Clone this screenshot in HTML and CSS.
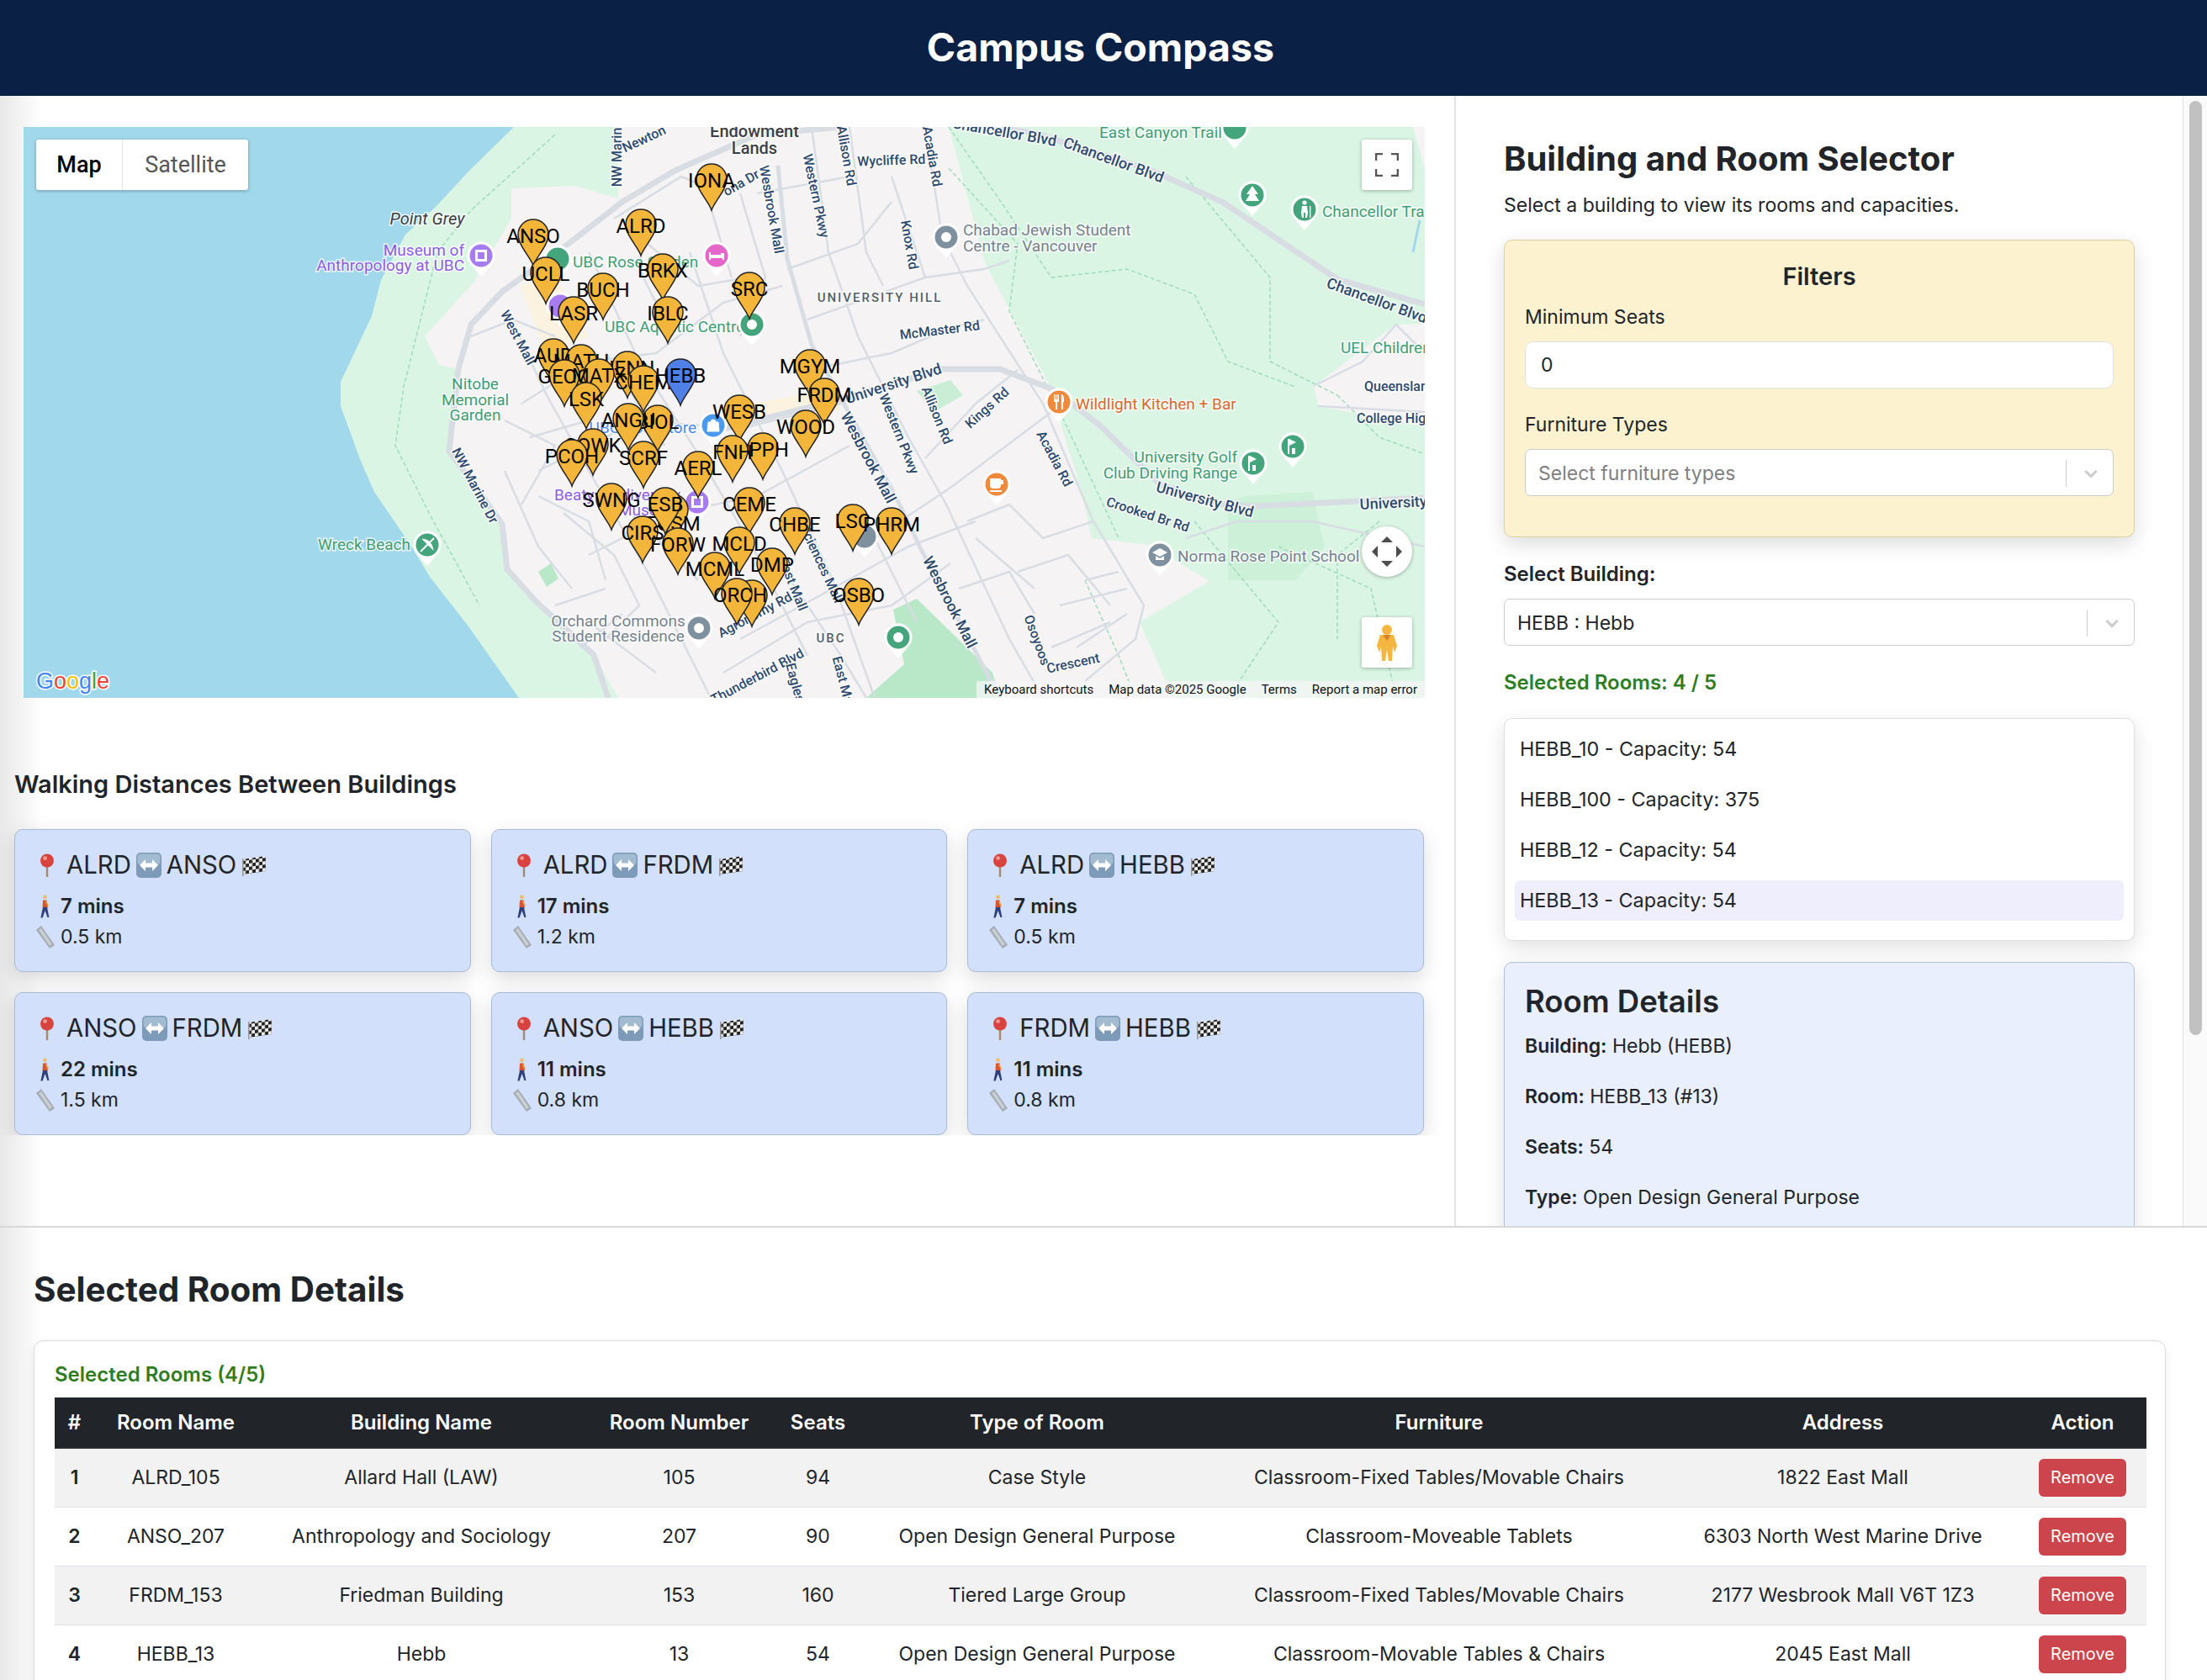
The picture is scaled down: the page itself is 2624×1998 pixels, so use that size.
FILE: index.html
```html
<!DOCTYPE html>
<html lang="en">
<head>
  <meta charset="UTF-8">
  <title>Campus Compass</title>
  <link rel="stylesheet" href="styles.css">
</head>
<body>

  <svg class="icon-defs" width="0" height="0">
    <defs>
      <pattern id="checks" width="8" height="8" patternUnits="userSpaceOnUse" patternTransform="skewY(-8)">
        <rect width="8" height="8" fill="#eee"/>
        <rect width="4" height="4" fill="#222"/>
        <rect x="4" y="4" width="4" height="4" fill="#222"/>
      </pattern>
      <symbol id="i-pin" viewBox="0 0 20 28">
        <rect x="8.8" y="11" width="2.4" height="17" fill="#a9896c"/>
        <circle cx="10" cy="8.5" r="8" fill="#d8433f"/>
        <circle cx="7.6" cy="5.6" r="2.4" fill="#f09a90"/>
      </symbol>
      <symbol id="i-swap" viewBox="0 0 30 30">
        <rect width="30" height="30" rx="5" fill="#7d9bb9"/>
        <rect x="1.5" y="1.5" width="27" height="13" rx="4" fill="#a3bbd0"/>
        <path d="M4 15l7-7v4.5h8V8l7 7-7 7v-4.5h-8V22z" fill="#fff"/>
      </symbol>
      <symbol id="i-flag" viewBox="0 0 29 26">
        <path d="M1 6l27-4v18L1 24z" fill="url(#checks)"/>
        <rect y="5" width="1.6" height="21" fill="#999"/>
      </symbol>
      <symbol id="i-walk" viewBox="0 0 14 28">
        <circle cx="7.5" cy="2.8" r="2.4" fill="#eebc6d"/>
        <path d="M5 6.5h4.6l1.4 9H4.5z" fill="#d8532f"/>
        <path d="M5 15h5l2.4 12h-2L7.6 19l-3 8.6H2.4z" fill="#2f3f7c"/>
        <path d="M9 7l3 6-1.4.7-2.6-5z" fill="#e9a13f"/>
      </symbol>
      <symbol id="i-ruler" viewBox="0 0 24 28">
        <path d="M1 6l6-5 16 23-6 4z" fill="#a4abb1"/>
        <path d="M4 6l3-2 13 19-3 2z" fill="#c9ced2"/>
      </symbol>
      <symbol id="i-chevron" viewBox="0 0 20 20">
        <path d="M4.5 7.5L10 13l5.5-5.5" fill="none" stroke="#ccc" stroke-width="2.6"/>
      </symbol>
    </defs>
  </svg>

  <header class="top-bar">
    <h1>Campus Compass</h1>
  </header>

  <div class="workspace">
    <div class="left-col">
      <div class="map-box">
        <svg class="map-art" viewBox="28 151 1666 679" width="1666" height="679">
          <defs>
            <path id="pin" d="M0 0C-3-10-18-24-18-37A18 18 0 1 1 18-37C18-24 3-10 0 0Z" stroke="#222" stroke-width="1.5"/>
            <g id="poi">
              <path d="M0 25L-12 11A16.5 16.5 0 1 1 12 11Z" fill="#fff"/>
              <circle r="13.5" fill="currentColor"/>
            </g>
          </defs>

          <!-- land -->
          <rect x="28" y="151" width="1666" height="679" fill="#a2d8ec"/>
          <path d="M611 151L557 204 519 245 482 279 453 333 442 376 405 454 405 483 428 546 445 585 488 648 511 686 557 745 617 830H1694V151Z" fill="#daf5e3"/>
          <path class="urban" d="M735 151V236L683 221 608 224V260L562 337 505 400 522 434 545 439 534 536 597 623 603 677 706 779 735 830H1395L1355 740 1438 691 1367 648 1298 640 1286 585 1246 454 1171 313 1128 151Z"/>
          <path class="urban" d="M1694 385L1659 386 1562 459 1567 483 1694 507Z"/>
          <path class="urban" d="M1694 151L1680 151 1694 200Z"/>
          <path d="M1460 600L1480 590 1560 585 1575 650 1540 690 1460 690Z" fill="#cdf0d8"/>
          <path d="M1062 725L1090 712 1180 800 1189 830H1030L1075 790Z" fill="#b9e8c8"/>
          <path d="M840 490L990 462 1000 488 850 512Z" fill="#fbf3e0"/>
          <path d="M618 340L660 330 700 400 650 420Z" fill="#fbf3e0"/>
          <path d="M640 680L655 670 664 688 650 698Z" fill="#b9e8c8"/>
          <path d="M1090 465L1130 452 1145 470 1110 490Z" fill="#c9eed5"/>
          <path d="M1680 300L1688 262" stroke="#a2d8ec" stroke-width="3" fill="none"/>

          <!-- trails -->
          <g class="trail">
            <path d="M1128 200L1210 290 1200 370 1265 500 1330 640"/>
            <path d="M1250 330L1340 320 1420 350 1460 430 1540 460"/>
            <path d="M1410 210L1510 330 1510 430 1590 470"/>
            <path d="M1420 620L1520 740 1460 830"/>
            <path d="M1520 650L1630 700 1660 830"/>
            <path d="M660 160L560 250 520 300 480 460 470 530 510 610 570 720"/>
            <path d="M1290 690L1330 780 1350 830"/>
            <path d="M1640 620L1590 660 1590 760"/>
            <path d="M1128 151L1190 240 1250 330M1590 470L1640 520 1694 540"/>
          </g>

          <!-- minor streets -->
          <g class="road-minor">
            <path d="M612 390L650 470 700 560 770 680 830 800 845 830"/>
            <path d="M700 300L760 430 830 540 900 660 960 780"/>
            <path d="M820 300L860 420 930 560 990 690 1040 830"/>
            <path d="M965 151L985 300 1020 400 1080 520 1125 600 1200 760 1240 830"/>
            <path d="M1010 151L1030 300 1050 340"/>
            <path d="M1100 151L1120 280 1150 340 1240 480 1300 620 1360 720 1350 760 1290 810"/>
            <path d="M1060 210L1100 330"/>
            <path d="M900 230L1010 210M936 320L1020 290 1060 240M960 380L1100 330 1170 320 1200 310"/>
            <path d="M960 440L1060 420 1130 390 1170 380"/>
            <path d="M1100 545L1160 480 1210 440M1040 640L1130 580 1250 490"/>
            <path d="M1150 620L1200 600 1240 640 1300 620M1210 680L1270 660 1320 720"/>
            <path d="M1260 720L1340 700M1250 770L1320 740"/>
            <path d="M640 560L760 500 880 510 1000 480"/>
            <path d="M620 480L700 430 780 420 860 360 930 340"/>
            <path d="M700 660L800 610 900 590 1010 530"/>
            <path d="M670 610L730 660 760 720 720 760"/>
            <path d="M700 740L780 800M750 610L830 690M630 520L700 500"/>
            <path d="M860 800L960 740 1060 720 1130 670"/>
            <path d="M880 760L990 700 1080 650 1160 620"/>
            <path d="M940 690L1000 780 1030 830M1040 640L1090 740"/>
            <path d="M560 400L610 380 660 400M730 260L810 210 860 230"/>
            <path d="M770 290L830 340 890 330M600 560L640 650 680 700"/>
            <path d="M1410 640L1470 620 1560 620 1694 650M1562 459L1620 430 1660 386 1694 420M1567 483L1694 490"/>
            <path d="M640 590L700 620 720 690M600 500L660 530 620 600M660 720L720 700M690 770L740 730"/>
            <path d="M880 230L910 330 880 400M840 230L870 330M760 320L800 400M720 420L790 530"/>
            <path d="M1140 700L1200 680 1230 730M1160 640L1230 700M1290 690L1330 680M1280 770L1340 730"/>
          </g>

          <!-- main roads -->
          <g class="road-main">
            <path d="M1000 151L900 160 804 202 740 240 677 289 597 347 560 386 545 439 534 536 597 623 603 677 637 715 706 779 723 830"/>
            <path d="M1180 151L1229 158 1367 202 1453 240 1590 332 1694 362"/>
            <path d="M860 510L1008 473 1120 439 1189 439 1252 463 1309 507 1378 575 1441 599 1493 602 1694 592"/>
          </g>
          <path class="road-mid" d="M925 197L936 308 965 410 1005 483 1062 585 1097 657 1154 764 1189 830"/>

          <!-- place names -->
          <g class="labels">
            <text class="place" x="508" y="267" font-style="italic">Point Grey</text>
            <text class="poi-purple" x="552" y="304" text-anchor="end">Museum of</text>
            <text class="poi-purple" x="552" y="322" text-anchor="end">Anthropology at UBC</text>
            <text class="poi-green" x="681" y="318" text-anchor="start">UBC Rose Garden</text>
            <text class="poi-green" x="719" y="395" text-anchor="start">UBC Aquatic Centre</text>
            <text class="poi-green" x="565" y="463">Nitobe</text>
            <text class="poi-green" x="565" y="482">Memorial</text>
            <text class="poi-green" x="565" y="500">Garden</text>
            <text class="poi-blue" x="828" y="515" text-anchor="end">UBC Bookstore</text>
            <text class="poi-purple" x="809" y="595" text-anchor="end">Beaty Biodiversity</text>
            <text class="poi-purple" x="809" y="613" text-anchor="end">Museum</text>
            <text class="poi-green" x="488" y="654" text-anchor="end">Wreck Beach</text>
            <text class="poi-grey" x="735" y="745">Orchard Commons</text>
            <text class="poi-grey" x="735" y="763">Student Residence</text>
            <text class="poi-grey" x="1145" y="280" text-anchor="start">Chabad Jewish Student</text>
            <text class="poi-grey" x="1145" y="299" text-anchor="start">Centre - Vancouver</text>
            <text class="poi-orange" x="1279" y="487" text-anchor="start">Wildlight Kitchen + Bar</text>
            <text class="poi-green" x="1471" y="550" text-anchor="end">University Golf</text>
            <text class="poi-green" x="1471" y="569" text-anchor="end">Club Driving Range</text>
            <text class="poi-grey" x="1400" y="668" text-anchor="start">Norma Rose Point School</text>
            <text class="poi-green" x="1307" y="164" text-anchor="start">East Canyon Trail</text>
            <text class="poi-green" x="1572" y="258" text-anchor="start">Chancellor Trail</text>
            <text class="poi-green" x="1594" y="420" text-anchor="start">UEL Children</text>
            <text class="place endow" x="897" y="163">Endowment</text>
            <text class="place endow" x="897" y="183">Lands</text>
            <text class="district" x="1046" y="359">UNIVERSITY HILL</text>
            <text class="district" x="988" y="764">UBC</text>
            <text class="road" x="1622" y="465" text-anchor="start">Queensland</text>
            <text class="road" x="1613" y="503" text-anchor="start">College High</text>
            <text class="road" transform="translate(1060 196) rotate(-2)">Wycliffe Rd</text>
            <text class="road" transform="translate(611 404) rotate(62)">West Mall</text>
            <text class="road" transform="translate(560 580) rotate(62)">NW Marine Dr</text>
            <text class="road" transform="translate(739 187) rotate(-90)">NW Marin</text>
            <text class="road" transform="translate(768 170) rotate(-25)">Newton</text>
            <text class="road" transform="translate(884 222) rotate(-30)">ona Dr</text>
            <text class="road" transform="translate(912 250) rotate(80)">Wesbrook Mall</text>
            <text class="road" transform="translate(965 234) rotate(78)">Western Pkwy</text>
            <text class="road" transform="translate(1001 186) rotate(80)">Allison Rd</text>
            <text class="road" transform="translate(1103 187) rotate(80)">Acadia Rd</text>
            <text class="road" transform="translate(1076 292) rotate(80)">Knox Rd</text>
            <text class="road" transform="translate(1118 398) rotate(-7)">McMaster Rd</text>
            <text class="road big" transform="translate(1064 462) rotate(-18)">University Blvd</text>
            <text class="road" transform="translate(1064 518) rotate(68)">Western Pkwy</text>
            <text class="road" transform="translate(1109 496) rotate(68)">Allison Rd</text>
            <text class="road" transform="translate(1177 489) rotate(-42)">Kings Rd</text>
            <text class="road big" transform="translate(1027 547) rotate(62)">Wesbrook Mall</text>
            <text class="road" transform="translate(1249 548) rotate(62)">Acadia Rd</text>
            <text class="road big" transform="translate(1431 600) rotate(15)">University Blvd</text>
            <text class="road big" transform="translate(1657 604) rotate(-3)">University</text>
            <text class="road" transform="translate(1363 617) rotate(18)">Crooked Br Rd</text>
            <text class="road big" transform="translate(1322 196) rotate(20)">Chancellor Blvd</text>
            <text class="road big" transform="translate(1193 163) rotate(10)">Chancellor Blvd</text>
            <text class="road big" transform="translate(1635 363) rotate(20)">Chancellor Blvd</text>
            <text class="road" transform="translate(972 673) rotate(65)">Sciences Mall</text>
            <text class="road" transform="translate(938 697) rotate(68)">East Mall</text>
            <text class="road" transform="translate(900 736) rotate(-28)">Agronomy Rd</text>
            <text class="road" transform="translate(903 809) rotate(-28)">Thunderbird Blvd</text>
            <text class="road" transform="translate(943 823) rotate(75)">Eagles Dr</text>
            <text class="road" transform="translate(998 814) rotate(75)">East Mall</text>
            <text class="road big" transform="translate(1124 719) rotate(63)">Wesbrook Mall</text>
            <text class="road" transform="translate(1228 763) rotate(70)">Osoyoos</text>
            <text class="road" transform="translate(1277 794) rotate(-12)">Crescent</text>
          </g>

          <!-- places of interest -->
          <g class="poi-icons">
            <g color="#a67cf0">
              <use href="#poi" x="572" y="304"/>
              <use href="#poi" x="666" y="364"/>
              <use href="#poi" x="829" y="597"/>
              <path d="M565 297h14v14h-14zM568 300v8h8v-8zM822 590h14v14h-14zM825 593v8h8v-8z" fill="#fff" fill-rule="evenodd"/>
            </g>
            <g color="#44a47c">
              <use href="#poi" x="663" y="308"/>
              <use href="#poi" x="894" y="386"/>
              <circle cx="894" cy="386" r="6" fill="#fff"/>
              <use href="#poi" x="508" y="648"/>
              <path d="M500 656L516 640M504 642a12 12 0 0 1 10 10z" stroke="#fff" stroke-width="2" fill="#fff"/>
              <use href="#poi" x="1068" y="758"/>
              <circle cx="1068" cy="758" r="6" fill="#fff"/>
              <use href="#poi" x="1468" y="152"/>
              <use href="#poi" x="1489" y="232"/>
              <path d="M1489 221l-7 10h4l-5 8h16l-5-8h4z" fill="#fff"/>
              <use href="#poi" x="1551" y="249"/>
              <circle cx="1551" cy="241" r="2.6" fill="#fff"/>
              <path d="M1548 245h6l1 8-1 6h-2v-6h-2v6h-2l-1-6zM1557 245h1.4v14H1557z" fill="#fff"/>
              <use href="#poi" x="1490" y="551"/>
              <path d="M1484 542h2v18h-2zM1486 542l8 4-8 4zM1489 553h4v7h-4z" fill="#fff"/>
              <use href="#poi" x="1537" y="531"/>
              <path d="M1531 522h2v18h-2zM1533 522l8 4-8 4zM1536 533h4v7h-4z" fill="#fff"/>
            </g>
            <use href="#poi" x="852" y="304" color="#e667c9"/>
            <path d="M843 300h2v3h12v-2h4v8h-2v-2h-14v2h-2z" fill="#fff"/>
            <use href="#poi" x="848" y="506" color="#4a9bf0"/>
            <path d="M842 502h12l1 11h-14zM845 502a3 3 0 0 1 6 0" fill="#fff" stroke="#fff"/>
            <g color="#7f919f">
              <use href="#poi" x="1125" y="282"/>
              <circle cx="1125" cy="282" r="6" fill="#fff"/>
              <use href="#poi" x="831" y="747"/>
              <circle cx="831" cy="747" r="6" fill="#fff"/>
              <use href="#poi" x="1379" y="660"/>
              <path d="M1370 657l9-5 9 5-9 5zM1374 661v5h10v-5l-5 3z" fill="#fff"/>
              <use href="#poi" x="1028" y="638"/>
            </g>
            <use href="#poi" x="1259" y="478" color="#ef8a3c"/>
            <path d="M1253 469v9h2v9h2v-9h2v-9h-1.5v6h-1v-6h-1v6h-1v-6zM1262 469c3 0 3 5 3 9h-1v9h-2z" fill="#fff"/>
            <use href="#poi" x="1185" y="576" color="#ef8a3c"/>
            <path d="M1177 569h13v8a4 4 0 0 1-4 4h-5a4 4 0 0 1-4-4zM1190 571h3v5h-3zM1177 583h14v2h-14z" fill="#fff"/>
          </g>

          <!-- building markers, south ones on top -->
          <g class="markers">
            <use class="pin" href="#pin" x="846" y="250"/><text x="846" y="223">IONA</text>
            <use class="pin" href="#pin" x="762" y="304"/><text x="762" y="277">ALRD</text>
            <use class="pin" href="#pin" x="634" y="316"/><text x="634" y="289">ANSO</text>
            <use class="pin" href="#pin" x="788" y="357"/><text x="788" y="330">BRKX</text>
            <use class="pin" href="#pin" x="649" y="361"/><text x="649" y="334">UCLL</text>
            <use class="pin" href="#pin" x="891" y="379"/><text x="891" y="352">SRC</text>
            <use class="pin" href="#pin" x="717" y="380"/><text x="717" y="353">BUCH</text>
            <use class="pin" href="#pin" x="682" y="408"/><text x="682" y="381">LASR</text>
            <use class="pin" href="#pin" x="794" y="408"/><text x="794" y="381">IBLC</text>
            <use class="pin" href="#pin" x="658" y="458"/><text x="658" y="431">AUD</text>
            <use class="pin" href="#pin" x="691" y="465"/><text x="691" y="438">MATH</text>
            <use class="pin" href="#pin" x="963" y="471"/><text x="963" y="444">MGYM</text>
            <use class="pin" href="#pin" x="746" y="473"/><text x="746" y="446">HENN</text>
            <use class="pin" href="#pin" x="671" y="483"/><text x="671" y="456">GEOG</text>
            <use class="pin" href="#pin" x="712" y="482"/><text x="712" y="455">MATX</text>
            <use class="pin" href="#pin" x="765" y="490"/><text x="765" y="463">CHEM</text>
            <use class="pin blue" href="#pin" x="809" y="482"/><text x="809" y="455">HEBB</text>
            <use class="pin" href="#pin" x="980" y="505"/><text x="980" y="478">FRDM</text>
            <use class="pin" href="#pin" x="697" y="510"/><text x="697" y="483">LSK</text>
            <use class="pin" href="#pin" x="879" y="525"/><text x="879" y="498">WESB</text>
            <use class="pin" href="#pin" x="782" y="537"/><text x="782" y="510">BIOL</text>
            <use class="pin" href="#pin" x="747" y="535"/><text x="747" y="508">ANGU</text>
            <use class="pin" href="#pin" x="958" y="543"/><text x="958" y="516">WOOD</text>
            <use class="pin" href="#pin" x="705" y="565"/><text x="705" y="538">SOWK</text>
            <use class="pin" href="#pin" x="907" y="570"/><text x="907" y="543">SPPH</text>
            <use class="pin" href="#pin" x="871" y="573"/><text x="871" y="546">FNH</text>
            <use class="pin" href="#pin" x="680" y="578"/><text x="680" y="551">PCOH</text>
            <use class="pin" href="#pin" x="765" y="580"/><text x="765" y="553">SCRF</text>
            <use class="pin" href="#pin" x="830" y="592"/><text x="830" y="565">AERL</text>
            <use class="pin" href="#pin" x="727" y="630"/><text x="727" y="603">SWNG</text>
            <use class="pin" href="#pin" x="891" y="635"/><text x="891" y="608">CEME</text>
            <use class="pin" href="#pin" x="800" y="643"/><text x="800" y="631">EOSM</text>
            <use class="pin" href="#pin" x="791" y="635"/><text x="791" y="608">ESB</text>
            <use class="pin" href="#pin" x="1014" y="655"/><text x="1014" y="628">LSC</text>
            <use class="pin" href="#pin" x="945" y="659"/><text x="945" y="632">CHBE</text>
            <use class="pin" href="#pin" x="1060" y="659"/><text x="1060" y="632">PHRM</text>
            <use class="pin" href="#pin" x="764" y="669"/><text x="764" y="642">CIRS</text>
            <use class="pin" href="#pin" x="879" y="682"/><text x="879" y="655">MCLD</text>
            <use class="pin" href="#pin" x="806" y="683"/><text x="806" y="656">FORW</text>
            <use class="pin" href="#pin" x="918" y="707"/><text x="918" y="680">DMP</text>
            <use class="pin" href="#pin" x="850" y="712"/><text x="850" y="685">MCML</text>
            <use class="pin" href="#pin" x="894" y="745"/>
            <use class="pin" href="#pin" x="876" y="743"/><text x="880" y="716">ORCH</text>
            <use class="pin" href="#pin" x="1021" y="743"/><text x="1021" y="716">OSBO</text>
          </g>

          <text class="google" x="43" y="819"><tspan fill="#4285f4">G</tspan><tspan fill="#ea4335">o</tspan><tspan fill="#fbbc05">o</tspan><tspan fill="#4285f4">g</tspan><tspan fill="#34a853">l</tspan><tspan fill="#ea4335">e</tspan></text>
        </svg>

        <div class="map-type">
          <span class="map-type-on">Map</span>
          <span class="map-type-off">Satellite</span>
        </div>

        <div class="map-btn fullscreen-btn">
          <svg width="28" height="28" viewBox="0 0 28 28"><path d="M1 9V1h8M19 1h8v8M27 19v8h-8M9 27H1v-8" fill="none" stroke="#555" stroke-width="2.6"/></svg>
        </div>

        <div class="pan-btn">
          <svg width="36" height="36" viewBox="0 0 36 36" fill="#4d4d4d"><path d="M18 0l7 7H11zM18 36l-7-7h14zM0 18l7-7v14zM36 18l-7 7V11z"/></svg>
        </div>

        <div class="map-btn pegman-btn">
          <svg width="26" height="44" viewBox="0 0 26 44">
            <circle cx="13" cy="7" r="6" fill="#f4b63f"/>
            <path d="M5 13h16l4 13-3 8-2-7-1 17h-4l-2-13-2 13H7L6 27l-2 7-3-8z" fill="#f4b63f"/>
            <path d="M8 13h10l-5 7z" fill="#d8832b"/>
          </svg>
        </div>

        <div class="map-attrib">
          <span>Keyboard shortcuts</span>
          <span>Map data ©2025 Google</span>
          <span>Terms</span>
          <span>Report a map error</span>
        </div>
      </div>

      <h3 class="walk-title">Walking Distances Between Buildings</h3>

      <div class="walk-clip">
        <div class="walk-grid">
          <div class="walk-card">
            <div class="walk-route"><svg class="ico-pin"><use href="#i-pin"/></svg><span>ALRD</span><svg class="ico-swap"><use href="#i-swap"/></svg><span>ANSO</span><svg class="ico-flag"><use href="#i-flag"/></svg></div>
            <div class="walk-line"><svg class="ico-walk"><use href="#i-walk"/></svg><strong>7 mins</strong></div>
            <div class="walk-line"><svg class="ico-ruler"><use href="#i-ruler"/></svg><span>0.5 km</span></div>
          </div>
          <div class="walk-card">
            <div class="walk-route"><svg class="ico-pin"><use href="#i-pin"/></svg><span>ALRD</span><svg class="ico-swap"><use href="#i-swap"/></svg><span>FRDM</span><svg class="ico-flag"><use href="#i-flag"/></svg></div>
            <div class="walk-line"><svg class="ico-walk"><use href="#i-walk"/></svg><strong>17 mins</strong></div>
            <div class="walk-line"><svg class="ico-ruler"><use href="#i-ruler"/></svg><span>1.2 km</span></div>
          </div>
          <div class="walk-card">
            <div class="walk-route"><svg class="ico-pin"><use href="#i-pin"/></svg><span>ALRD</span><svg class="ico-swap"><use href="#i-swap"/></svg><span>HEBB</span><svg class="ico-flag"><use href="#i-flag"/></svg></div>
            <div class="walk-line"><svg class="ico-walk"><use href="#i-walk"/></svg><strong>7 mins</strong></div>
            <div class="walk-line"><svg class="ico-ruler"><use href="#i-ruler"/></svg><span>0.5 km</span></div>
          </div>
          <div class="walk-card">
            <div class="walk-route"><svg class="ico-pin"><use href="#i-pin"/></svg><span>ANSO</span><svg class="ico-swap"><use href="#i-swap"/></svg><span>FRDM</span><svg class="ico-flag"><use href="#i-flag"/></svg></div>
            <div class="walk-line"><svg class="ico-walk"><use href="#i-walk"/></svg><strong>22 mins</strong></div>
            <div class="walk-line"><svg class="ico-ruler"><use href="#i-ruler"/></svg><span>1.5 km</span></div>
          </div>
          <div class="walk-card">
            <div class="walk-route"><svg class="ico-pin"><use href="#i-pin"/></svg><span>ANSO</span><svg class="ico-swap"><use href="#i-swap"/></svg><span>HEBB</span><svg class="ico-flag"><use href="#i-flag"/></svg></div>
            <div class="walk-line"><svg class="ico-walk"><use href="#i-walk"/></svg><strong>11 mins</strong></div>
            <div class="walk-line"><svg class="ico-ruler"><use href="#i-ruler"/></svg><span>0.8 km</span></div>
          </div>
          <div class="walk-card">
            <div class="walk-route"><svg class="ico-pin"><use href="#i-pin"/></svg><span>FRDM</span><svg class="ico-swap"><use href="#i-swap"/></svg><span>HEBB</span><svg class="ico-flag"><use href="#i-flag"/></svg></div>
            <div class="walk-line"><svg class="ico-walk"><use href="#i-walk"/></svg><strong>11 mins</strong></div>
            <div class="walk-line"><svg class="ico-ruler"><use href="#i-ruler"/></svg><span>0.8 km</span></div>
          </div>
        </div>
      </div>
    </div>

    <div class="right-col">
      <h2 class="picker-title">Building and Room Selector</h2>
      <p class="picker-sub">Select a building to view its rooms and capacities.</p>

      <div class="filters">
        <h3>Filters</h3>
        <label>Minimum Seats</label>
        <div class="num-input">0</div>
        <label class="second">Furniture Types</label>
        <div class="select-box placeholder">
          <span>Select furniture types</span>
          <i class="select-sep"></i>
          <svg class="select-arrow"><use href="#i-chevron"/></svg>
        </div>
      </div>

      <label class="building-label">Select Building:</label>
      <div class="select-box">
        <span>HEBB : Hebb</span>
        <i class="select-sep"></i>
        <svg class="select-arrow"><use href="#i-chevron"/></svg>
      </div>

      <div class="room-count">Selected Rooms: 4 / 5</div>

      <div class="room-list">
        <div class="room-item">HEBB_10 - Capacity: 54</div>
        <div class="room-item">HEBB_100 - Capacity: 375</div>
        <div class="room-item">HEBB_12 - Capacity: 54</div>
        <div class="room-item active">HEBB_13 - Capacity: 54</div>
      </div>

      <div class="room-details">
        <h3>Room Details</h3>
        <p><strong>Building:</strong> Hebb (HEBB)</p>
        <p><strong>Room:</strong> HEBB_13 (#13)</p>
        <p><strong>Seats:</strong> 54</p>
        <p><strong>Type:</strong> Open Design General Purpose</p>
        <p><strong>Furniture:</strong> Classroom-Movable Tables &amp; Chairs</p>
      </div>
    </div>

    <div class="scroll-track"><div class="scroll-thumb"></div></div>
  </div>

  <section class="summary">
    <h2>Selected Room Details</h2>
    <div class="summary-card">
      <div class="summary-count">Selected Rooms (4/5)</div>
      <table class="summary-table">
        <colgroup>
          <col class="c-num"><col class="c-room"><col class="c-building"><col class="c-number"><col class="c-seats"><col class="c-type"><col class="c-furn"><col class="c-addr"><col class="c-action">
        </colgroup>
        <thead>
          <tr><th>#</th><th>Room Name</th><th>Building Name</th><th>Room Number</th><th>Seats</th><th>Type of Room</th><th>Furniture</th><th>Address</th><th>Action</th></tr>
        </thead>
        <tbody>
          <tr><td class="row-num">1</td><td>ALRD_105</td><td>Allard Hall (LAW)</td><td>105</td><td>94</td><td>Case Style</td><td>Classroom-Fixed Tables/Movable Chairs</td><td>1822 East Mall</td><td><button class="remove-btn">Remove</button></td></tr>
          <tr><td class="row-num">2</td><td>ANSO_207</td><td>Anthropology and Sociology</td><td>207</td><td>90</td><td>Open Design General Purpose</td><td>Classroom-Moveable Tablets</td><td>6303 North West Marine Drive</td><td><button class="remove-btn">Remove</button></td></tr>
          <tr><td class="row-num">3</td><td>FRDM_153</td><td>Friedman Building</td><td>153</td><td>160</td><td>Tiered Large Group</td><td>Classroom-Fixed Tables/Movable Chairs</td><td>2177 Wesbrook Mall V6T 1Z3</td><td><button class="remove-btn">Remove</button></td></tr>
          <tr><td class="row-num">4</td><td>HEBB_13</td><td>Hebb</td><td>13</td><td>54</td><td>Open Design General Purpose</td><td>Classroom-Movable Tables &amp; Chairs</td><td>2045 East Mall</td><td><button class="remove-btn">Remove</button></td></tr>
        </tbody>
      </table>
    </div>
  </section>

</body>
</html>
```

FILE: styles.css
```css
* {
  box-sizing: border-box;
}

html, body {
  margin: 0;
  height: 1998px;
  overflow: hidden;
}

body {
  font-family: Inter, "Noto Sans", sans-serif;
  font-size: 23px;
  line-height: 34px;
  color: #212529;
  background: linear-gradient(to right, #e8e8e8, #fff 50px);
}

h1, h2, h3, p {
  margin: 0;
}

.icon-defs {
  position: absolute;
}

.top-bar {
  height: 114px;
  padding-right: 7px;
  background-color: #0a2044;
  color: white;
  text-align: center;
}

.top-bar h1 {
  font-size: 46.5px;
  font-weight: 700;
  line-height: 112px;
}

.workspace {
  display: flex;
  height: 1346px;
  border-bottom: 2px solid #d6d8da;
  overflow: hidden;
}

/* Left column */
.left-col {
  width: 1731px;
  padding: 37px 36px 0 17px;
  border-right: 2px solid #e2e3e5;
}

.map-box {
  position: relative;
  width: 1666px;
  height: 679px;
  margin-left: 11px;
  overflow: hidden;
}

.map-art {
  display: block;
  font-family: Roboto, sans-serif;
}

.urban {
  fill: #f5f3f4;
}

.trail path {
  fill: none;
  stroke: #9fdcba;
  stroke-width: 1.5;
  stroke-dasharray: 5 3;
}

.road-minor path {
  fill: none;
  stroke: #d8dde4;
  stroke-width: 2.5;
}

.road-main path {
  fill: none;
  stroke: #d8dde4;
  stroke-width: 7;
}

.road-mid {
  fill: none;
  stroke: #d8dde4;
  stroke-width: 5;
}

.labels {
  text-anchor: middle;
}

.labels text {
  font-size: 19px;
  paint-order: stroke;
  stroke: rgba(255, 255, 255, 0.8);
  stroke-width: 3px;
}

.labels .road {
  font-size: 16px;
  font-weight: 500;
  fill: #2d4a6e;
}

.labels .road.big {
  font-size: 18px;
}

.labels .place {
  font-size: 20px;
  fill: #3b3f45;
}

.labels .endow {
  font-size: 20px;
  font-weight: 500;
}

.labels .district {
  font-size: 15px;
  font-weight: 500;
  letter-spacing: 2px;
  fill: #555f68;
}

.labels .poi-purple { fill: #8d5ce6; }
.labels .poi-green { fill: #3f9d74; }
.labels .poi-blue { fill: #4a8af0; }
.labels .poi-grey { fill: #75828e; }
.labels .poi-orange { fill: #d8682d; }

.pin {
  fill: #f3b63a;
}

.pin.blue {
  fill: #4f80e8;
}

.markers text {
  font-size: 24px;
  text-anchor: middle;
  fill: #000;
}

.google {
  font-family: "Liberation Sans", sans-serif;
  font-size: 27px;
  paint-order: stroke;
  stroke: #fff;
  stroke-width: 3px;
}

.map-type {
  position: absolute;
  top: 15px;
  left: 15px;
  display: flex;
  height: 60px;
  background: white;
  border-radius: 3px;
  box-shadow: 0 1px 4px rgba(0, 0, 0, 0.3);
  font-family: Roboto, sans-serif;
  font-size: 27px;
  line-height: 60px;
}

.map-type-on {
  width: 103px;
  text-align: center;
  color: #000;
  font-weight: 500;
  border-right: 1px solid #e6e6e6;
}

.map-type-off {
  width: 149px;
  text-align: center;
  color: #565656;
}

.map-btn {
  position: absolute;
  left: 1591px;
  display: flex;
  align-items: center;
  justify-content: center;
  width: 60px;
  height: 60px;
  background: white;
  border-radius: 3px;
  box-shadow: 0 1px 4px rgba(0, 0, 0, 0.3);
}

.fullscreen-btn {
  top: 15px;
}

.pegman-btn {
  top: 583px;
}

.pan-btn {
  position: absolute;
  top: 475px;
  left: 1591px;
  display: flex;
  align-items: center;
  justify-content: center;
  width: 60px;
  height: 60px;
  background: white;
  border-radius: 50%;
  box-shadow: 0 1px 4px rgba(0, 0, 0, 0.3);
}

.map-attrib {
  position: absolute;
  right: 0;
  bottom: 0;
  display: flex;
  gap: 18px;
  height: 20px;
  padding: 0 9px;
  background: rgba(245, 245, 245, 0.75);
  font-family: Roboto, sans-serif;
  font-size: 15px;
  line-height: 20px;
  color: #111;
}

.walk-title {
  margin-top: 83px;
  font-size: 29px;
  font-weight: 600;
  line-height: 40px;
}

.walk-clip {
  margin-top: 33px;
  clip-path: inset(-40px -40px 0 -40px);
}

.walk-grid {
  display: grid;
  grid-template-columns: repeat(3, 1fr);
  gap: 24px;
}

.walk-card {
  height: 170px;
  padding: 22px 24px;
  background: #d2e0fb;
  border: 1px solid #a9b9d6;
  border-radius: 10px;
  box-shadow: 0 8px 24px rgba(0, 0, 0, 0.14);
}

.walk-route {
  display: flex;
  align-items: center;
  gap: 6px;
  height: 40px;
  font-size: 29.3px;
}

.ico-pin {
  width: 20px;
  height: 28px;
  margin: 0 7px 0 4px;
}

.ico-swap {
  width: 30px;
  height: 30px;
}

.ico-flag {
  width: 29px;
  height: 26px;
  margin-left: 1px;
}

.walk-line {
  display: flex;
  align-items: center;
  gap: 6px;
  height: 34px;
}

.walk-route + .walk-line {
  margin: 12px 0 2px;
}

.walk-line strong {
  font-size: 24px;
  font-weight: 600;
}

.ico-walk {
  width: 14px;
  height: 28px;
  margin: 0 6px 0 4px;
}

.ico-ruler {
  width: 24px;
  height: 28px;
}

/* Right column */
.right-col {
  flex: 1;
  min-width: 0;
  padding: 51px 57px 0 57px;
  overflow: hidden;
}

.picker-title {
  font-size: 40px;
  font-weight: 700;
  line-height: 48px;
}

.picker-sub {
  margin-top: 14px;
}

.filters {
  height: 354px;
  margin-top: 24px;
  padding: 25px 24px 0;
  background: #fdf2cf;
  border: 1px solid #dccfa6;
  border-radius: 10px;
  box-shadow: 0 8px 24px rgba(0, 0, 0, 0.14);
}

.filters h3 {
  font-size: 29px;
  font-weight: 600;
  line-height: 36px;
  text-align: center;
}

.filters label {
  display: block;
  margin: 13px 0 12px;
}

.filters label.second {
  margin-top: 26px;
}

.num-input {
  height: 56px;
  padding: 0 18px;
  background: white;
  border: 1px solid #dee2e6;
  border-radius: 10px;
  line-height: 54px;
}

.select-box {
  display: flex;
  align-items: center;
  height: 56px;
  padding: 2px 14px 0 15px;
  background: white;
  border: 1px solid #ccc;
  border-radius: 7px;
}

.select-box span {
  flex: 1;
}

.select-box.placeholder {
  color: #808080;
}

.select-sep {
  width: 1px;
  height: 32px;
  background: #ccc;
}

.select-arrow {
  width: 24px;
  height: 24px;
  margin-left: 17px;
}

.building-label {
  display: block;
  margin: 27px 0 12px;
  font-size: 24px;
  font-weight: 600;
}

.room-count {
  margin-top: 27px;
  font-size: 24px;
  font-weight: 600;
  color: #2e7d22;
}

.room-list {
  margin-top: 25px;
  padding: 12px 12px 23px;
  background: white;
  border: 1px solid #dcdfe3;
  border-radius: 10px;
  box-shadow: 0 8px 24px rgba(0, 0, 0, 0.12);
}

.room-item {
  height: 48px;
  padding: 0 6px;
  font-size: 23.3px;
  line-height: 48px;
  border-radius: 6px;
}

.room-item + .room-item {
  margin-top: 12px;
}

.room-item.active {
  background: #efeefd;
}

.room-details {
  margin-top: 25px;
  padding: 24px 24px 0;
  background: #e9effd;
  border: 1px solid #b3bfd4;
  border-radius: 10px;
  box-shadow: 0 8px 24px rgba(0, 0, 0, 0.12);
}

.room-details h3 {
  font-size: 36.5px;
  font-weight: 600;
  line-height: 44px;
  margin-bottom: 14px;
}

.room-details p {
  margin-bottom: 26px;
}

.room-details strong {
  font-weight: 600;
}

.scroll-track {
  flex: none;
  width: 29px;
  padding: 6px 6px 0 7px;
  background: #fafafa;
  border-left: 1px solid #e4e4e4;
}

.scroll-thumb {
  height: 1111px;
  background: #c1c1c1;
  border-radius: 8px;
}

/* Lower summary */
.summary {
  padding: 50px 49px 0 40px;
}

.summary h2 {
  font-size: 40.4px;
  font-weight: 700;
  line-height: 48px;
}

.summary-card {
  margin-top: 36px;
  padding: 23px 24px 0;
  height: 500px;
  background: white;
  border: 1px solid #d8dadd;
  border-radius: 12px;
  box-shadow: 0 4px 14px rgba(0, 0, 0, 0.07);
}

.summary-count {
  margin-bottom: 10px;
  font-size: 24px;
  font-weight: 600;
  color: #2e7d22;
}

.summary-table {
  width: 2487px;
  table-layout: fixed;
  border-collapse: collapse;
}

.c-num { width: 47px; }
.c-room { width: 194px; }
.c-building { width: 390px; }
.c-number { width: 223px; }
.c-seats { width: 107px; }
.c-type { width: 414px; }
.c-furn { width: 542px; }
.c-addr { width: 418px; }
.c-action { width: 152px; }

.summary-table th {
  height: 60px;
  background: #212529;
  color: white;
  font-size: 24px;
  font-weight: 600;
  text-align: center;
  border-bottom: 1px solid #373b3e;
  white-space: nowrap;
}

.summary-table td {
  height: 70px;
  padding: 0;
  text-align: center;
  border-bottom: 1px solid #dee2e6;
  white-space: nowrap;
}

.summary-table tbody tr:nth-child(odd) td {
  background: #f2f2f2;
}

.summary-table .row-num {
  font-weight: 600;
}

.remove-btn {
  width: 104px;
  height: 45px;
  padding: 0;
  background-color: #cd454c;
  color: white;
  border: none;
  border-radius: 6px;
  font-family: inherit;
  font-size: 20px;
  cursor: pointer;
}
```
